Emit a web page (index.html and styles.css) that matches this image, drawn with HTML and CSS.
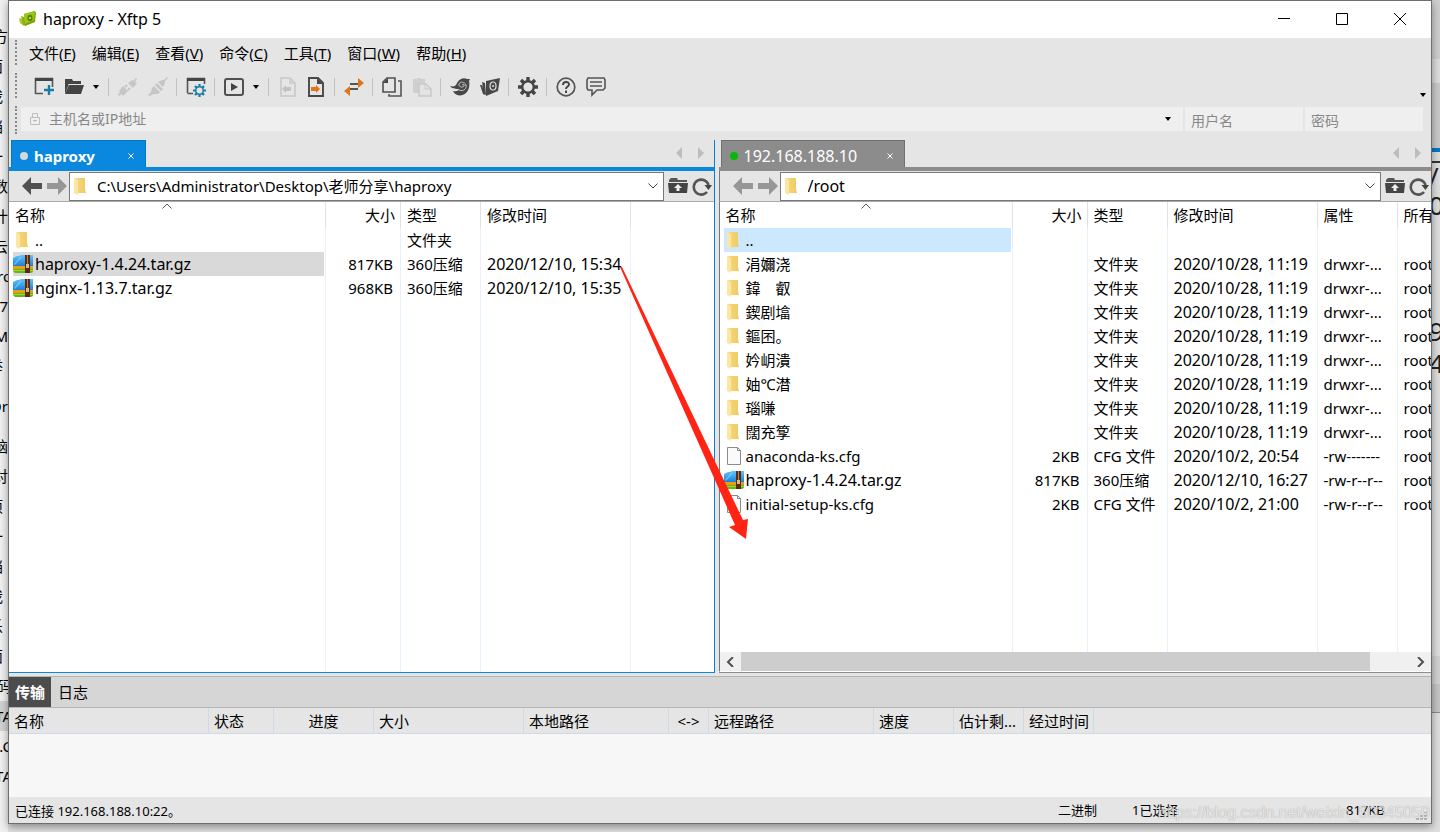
FILE: index.html
```html
<!DOCTYPE html>
<html lang="zh-CN">
<head>
<meta charset="utf-8">
<title>haproxy - Xftp 5</title>
<link rel="stylesheet" href="styles.css">
</head>
<body>
<svg class="defs" aria-hidden="true">
  <defs>
    <linearGradient id="foldGrad" x1="0" x2="1"><stop offset="0" stop-color="#f6d77c"/><stop offset="1" stop-color="#eecb62"/></linearGradient>
    <linearGradient id="skyGrad" x1="0" y1="0" x2="0" y2="1"><stop offset="0" stop-color="#62c4fa"/><stop offset="1" stop-color="#1b82d6"/></linearGradient>
  </defs>
  <symbol id="folder" viewBox="0 0 20 20"><path d="M4 2h10v11l1 4H7z" fill="url(#foldGrad)"/><path d="M3 2l4 2v15l-4-2z" fill="#fbe6a4"/></symbol>
  <symbol id="archive" viewBox="0 0 20 20"><path d="M0 4l4-2 2 0 2-1h12v11H0z" fill="url(#skyGrad)"/><path d="M1 10l6-7 2 0-7 8z" fill="#8ad8ff" opacity=".6"/><path d="M0 12h20v3H0z" fill="#f49a12"/><path d="M0 15h20v3l-2 1H2l-2-2z" fill="#63b71d"/><path d="M0 16h20v1H0z" fill="#9bdc2d"/><path d="M12 1h5v18h-5z" fill="#5b2c14"/><path d="M14 1h1v11h-1z" fill="#b88350"/><path d="M13 10h3v4h-3z" fill="#d9bb8b"/></symbol>
  <symbol id="file" viewBox="0 0 20 20"><path d="M3.500 1.500h10l3 3v14h-13z" fill="#fafafa" stroke="#8b8b8b"/><path d="M13.500 1.500v3h3" fill="none" stroke="#8b8b8b"/></symbol>
  <symbol id="back" viewBox="0 0 20 18"><path d="M0 9L9 0v6h11v6H9v6z" fill="currentColor"/></symbol>
  <symbol id="up" viewBox="0 0 20 18"><path d="M1 3l2-2h6l1 2h9v2H1z" fill="#555"/><path d="M0 6h20l-1 10H1z" fill="#444"/><path d="M10 7L6 11h2.500v3h3v-3H14z" fill="#eee"/></symbol>
  <symbol id="reload" viewBox="0 0 20 20"><path d="M15 16a7.500 7.500 0 1 1 1.500-7" fill="none" stroke="#555" stroke-width="2.600"/><path d="M12.500 9h7.500l-3.500 5z" fill="#444"/></symbol>
  <symbol id="chev" viewBox="0 0 10 6"><path d="M.5.5L5 5 9.500.5" fill="none" stroke="#444"/></symbol>
  <symbol id="down" viewBox="0 0 8 6"><path d="M1 1h6L4 5z" fill="#000"/></symbol>
  <symbol id="cross" viewBox="0 0 6 6"><path d="M.5.5l5 5M5.500.5l-5 5" fill="none" stroke="#fff"/></symbol>
  <symbol id="gear" viewBox="0 0 20 20"><path d="M10 0v4M10 16v4M0 10h4M16 10h4M3 3l3 3M14 14l3 3M17 3l-3 3M6 14l-3 3" stroke="currentColor" stroke-width="3.400"/><circle cx="10" cy="10" r="5.800" fill="none" stroke="currentColor" stroke-width="2.400"/></symbol>
</svg>

<div class="desktop">
  <div class="edge-left" aria-hidden="true">
    <span>方</span><span class="in">面</span><span class="in">我</span><span class="in">档</span><span class="in">一</span><span>数</span><span>计</span><span>云</span><span class="out">ro</span><span>07</span><span>M</span><span class="in">举</span><span class="gap">Or</span><span class="gap">脑</span><span>对</span><span class="in">项</span><span class="in">一</span><span class="in">档</span><span class="in">我</span><span class="in">乐</span><span class="in">面</span><span class="out">号码</span><span class="hit out">TA</span><span class="out">.C</span><span class="out">TA</span>
  </div>

  <main class="window">
    <header class="title">
      <svg class="logo" viewBox="0 0 18 18"><path d="M0 8l3 1 2 7-4-3z" fill="#a9c62c"/><path d="M2 6l3 1 2 9-3-1z" fill="#8fae16"/><path d="M5 4l11-3 1 2-1 9-10 4z" fill="#76a500"/><path d="M5 4l11-3-1 9-9 4z" fill="#9bc713"/><ellipse cx="11" cy="8" rx="2.600" ry="3.200" fill="#5b8500"/><circle cx="11" cy="8" r="1" fill="#d5ee79"/></svg>
      <h1>haproxy - Xftp 5</h1>
      <button class="wbtn" aria-label="最小化"><svg width="12" height="12" viewBox="0 0 12 12"><path d="M0 5.500h12" stroke="#000"/></svg></button>
      <button class="wbtn" aria-label="最大化"><svg width="12" height="12" viewBox="0 0 12 12"><path d="M.5.5h11v11H.5z" fill="none" stroke="#000"/></svg></button>
      <button class="wbtn" aria-label="关闭"><svg width="12" height="12" viewBox="0 0 12 12"><path d="M0 0l12 12M12 0L0 12" stroke="#000"/></svg></button>
    </header>

    <nav class="menu grip">
      <button>文件(<u>F</u>)</button><button>编辑(<u>E</u>)</button><button>查看(<u>V</u>)</button><button>命令(<u>C</u>)</button><button>工具(<u>T</u>)</button><button>窗口(<u>W</u>)</button><button>帮助(<u>H</u>)</button>
    </nav>

    <div class="tools grip">
      <button aria-label="新建"><svg viewBox="0 0 20 20"><path d="M1.500 17V1.500h17V10M1.500 16.500H9" fill="none" stroke="#555" stroke-width="1.600"/><path d="M1 1h18v3H1z" fill="#444"/><path d="M15 8v10M10 13h10" stroke="#1a7ca6" stroke-width="2.400"/></svg></button>
      <button aria-label="打开"><svg viewBox="0 0 20 20"><path d="M1 2h7l1 2h8v3H5L1 17z" fill="#444"/><path d="M5 8h15l-3 9H1z" fill="#444"/><path d="M4.500 7.500H18" stroke="#e5e5e5"/></svg></button>
      <button class="drop" aria-label="打开列表"><svg viewBox="0 0 8 6"><use href="#down"/></svg></button>
      <i class="sep"></i>
      <button aria-label="断开"><svg viewBox="0 0 20 20" fill="#c6c6c6"><path d="M1 14l4-5 5 5-5 5-1-2-3 2-1-1 2-3zM10 6l4-3 1 1 3-3 1 1-2 3 2 1-4 5z"/><path d="M7 10l2-2M10 13l2-2" stroke="#c6c6c6" stroke-width="2"/></svg></button>
      <button aria-label="连接"><svg viewBox="0 0 20 20" fill="#c6c6c6"><path d="M0 18l3-3 1-4 2-2 6 6-2 2-4 0-5 2zM7 8l2-2 6 6-2 2zM10 5l4-2 2 0 3-3 1 1-3 3 0 2-2 4z"/></svg></button>
      <i class="sep"></i>
      <button aria-label="属性"><svg viewBox="0 0 20 20"><path d="M1.500 16V1.500h17V7M1.500 16.500H7" fill="none" stroke="#555" stroke-width="1.600"/><path d="M1 1h18v3H1z" fill="#444"/><svg x="7" y="7" width="13" height="13" color="#1a7ca6"><use href="#gear"/></svg></svg></button>
      <i class="sep"></i>
      <button aria-label="运行"><svg viewBox="0 0 20 20"><rect x="1" y="2" width="18" height="16" rx="2" fill="none" stroke="#505050" stroke-width="2"/><path d="M7 6l7 4-7 4z" fill="#444"/></svg></button>
      <button class="drop" aria-label="运行列表"><svg viewBox="0 0 8 6"><use href="#down"/></svg></button>
      <i class="sep"></i>
      <button class="tight" aria-label="上一个"><svg viewBox="0 0 20 20"><path d="M3 1h9l5 5v13H3z" fill="none" stroke="#c8c8c8" stroke-width="1.600"/><path d="M11 1v6h6" fill="#d0d0d0"/><path d="M4 12l4-4v2h5v4H8v2z" fill="#c2c2c2"/></svg></button>
      <button aria-label="下一个"><svg viewBox="0 0 20 20"><path d="M3 1h9l5 5v13H3z" fill="none" stroke="#484848" stroke-width="1.900"/><path d="M11 1v6h6" fill="#484848"/><path d="M14 12l-4-4v2H5v4h5v2z" fill="#e0761a"/></svg></button>
      <i class="sep"></i>
      <button aria-label="同步"><svg viewBox="0 0 20 20"><path d="M6 7h9M5 12h9" stroke="#555" stroke-width="1.800"/><path d="M14 1l6 5-6 5zM6 9L0 14l6 5z" fill="#e0761a"/></svg></button>
      <i class="sep"></i>
      <button aria-label="复制"><svg viewBox="0 0 20 20"><path d="M5 1h8v14H1V5z" fill="none" stroke="#505050" stroke-width="1.600"/><path d="M1 6l5-5v5z" fill="#444"/><path d="M16 4h3v15H7v-2" fill="none" stroke="#555" stroke-width="1.600"/></svg></button>
      <button aria-label="粘贴"><svg viewBox="0 0 20 20"><path d="M1 2h4V1h4v1h4v5H8v9H1z" fill="#cfcfcf"/><path d="M7 7h7l5 5v7H7z" fill="#e3e3e3" stroke="#c9c9c9" stroke-width="1.500"/><path d="M13 7v5h6" fill="none" stroke="#c9c9c9"/></svg></button>
      <i class="sep"></i>
      <button aria-label="Xshell"><svg viewBox="0 0 20 20"><path d="M0 9c4 1 6 0 7-3C9 2 14 0 17 2l3 0-1 2c1 4 0 9-3 12-4 4-11 3-13-2 4 1 6-1 6-2-3 0-7 0-9-3z" fill="#474747"/><path d="M9 13c5 2 8-2 7-5s-6-4-7-1 4 4 5 2-1-2-2-1" fill="none" stroke="#c8c8c8" stroke-width="1"/></svg></button>
      <button aria-label="Xftp"><svg viewBox="0 0 20 20"><path d="M0 8l2 0 3 10-2-1zM2 5l3 1 1 12-2-1zM6 4l14-3-2 13-12 5z" fill="#474747"/><ellipse cx="13" cy="9" rx="3" ry="4" fill="none" stroke="#ddd" stroke-width="1.200"/><circle cx="13" cy="9" r="1" fill="#ddd"/></svg></button>
      <i class="sep"></i>
      <button aria-label="选项"><svg viewBox="0 0 20 20" color="#444"><use href="#gear"/></svg></button>
      <i class="sep"></i>
      <button aria-label="帮助"><svg viewBox="0 0 20 20"><circle cx="10" cy="10" r="8.800" fill="none" stroke="#555" stroke-width="1.700"/><path d="M7 8c0-4 6-4 6-.5 0 2-3 2-3 4.500M10 13.500V16" fill="none" stroke="#444" stroke-width="1.900"/></svg></button>
      <button aria-label="反馈"><svg viewBox="0 0 20 20"><path d="M1 3l1-2h16l1 2v8l-2 2h-6l-5 5v-5H2l-1-2z" fill="none" stroke="#555" stroke-width="1.600"/><path d="M4 5h12M4 9h12" stroke="#555" stroke-width="1.500"/></svg></button>
      <button class="drop more" aria-label="工具栏选项"><svg viewBox="0 0 8 6"><use href="#down"/></svg></button>
    </div>

    <form class="address grip">
      <label class="field host"><svg width="10" height="12" viewBox="0 0 10 12"><path d="M.5 4.500h9v7h-9zM2.500 4V.5h5V4M5 7v2M3 7.500h4" fill="none" stroke="#bcbcbc"/></svg><input aria-label="主机名或IP地址" placeholder="主机名或IP地址"><svg class="tiny" viewBox="0 0 8 6"><use href="#down"/></svg></label>
      <label class="field cred"><input aria-label="用户名" placeholder="用户名"></label>
      <label class="field cred"><input type="password" aria-label="密码" placeholder="密码"></label>
    </form>

    <div class="panes">
      <section class="pane local">
        <div class="tabs">
          <button class="tab"><i class="dot"></i><b>haproxy</b><svg width="6" height="6"><use href="#cross"/></svg></button>
          <span class="pager"><svg viewBox="0 0 28 12"><path d="M6 0v12L0 6zM22 0v12l6-6z" fill="#bdbdbd"/></svg></span>
        </div>
        <div class="path">
          <button class="nav dark" aria-label="后退"><svg viewBox="0 0 20 18"><use href="#back"/></svg></button>
          <button class="nav flip" aria-label="前进"><svg viewBox="0 0 20 18"><use href="#back"/></svg></button>
          <label class="combo"><svg width="20" height="20"><use href="#folder"/></svg><input aria-label="本地路径" value="C:\Users\Administrator\Desktop\老师分享\haproxy"><svg width="10" height="6"><use href="#chev"/></svg></label>
          <button class="act" aria-label="上级目录"><svg width="20" height="18"><use href="#up"/></svg></button>
          <button class="act" aria-label="刷新"><svg width="20" height="20"><use href="#reload"/></svg></button>
        </div>
        <div class="list">
          <table class="files">
            <colgroup><col class="c-name-l"><col class="c-size"><col class="c-type"><col class="c-date"><col></colgroup>
            <thead><tr><th>名称<svg class="sort" viewBox="0 0 10 6"><path d="M.5 5.500L5 1l4.500 4.500" fill="none" stroke="#555"/></svg></th><th class="num">大小</th><th>类型</th><th>修改时间</th><th></th></tr></thead>
            <tbody>
              <tr><td><span class="name"><svg><use href="#folder"/></svg>..</span></td><td></td><td>文件夹</td><td></td><td></td></tr>
              <tr><td><span class="name lat picked"><svg><use href="#archive"/></svg>haproxy-1.4.24.tar.gz</span></td><td class="num">817KB</td><td>360压缩</td><td class="lat">2020/12/10, 15:34</td><td></td></tr>
              <tr><td><span class="name lat"><svg><use href="#archive"/></svg>nginx-1.13.7.tar.gz</span></td><td class="num">968KB</td><td>360压缩</td><td class="lat">2020/12/10, 15:35</td><td></td></tr>
              <tr class="fill"><td></td><td></td><td></td><td></td><td></td></tr>
            </tbody>
          </table>
        </div>
      </section>

      <section class="pane remote">
        <div class="tabs">
          <button class="tab"><i class="dot"></i><span class="lat">192.168.188.10</span><svg width="6" height="6"><use href="#cross"/></svg></button>
          <span class="pager"><svg viewBox="0 0 28 12"><path d="M6 0v12L0 6zM22 0v12l6-6z" fill="#bdbdbd"/></svg></span>
        </div>
        <div class="path">
          <button class="nav" aria-label="后退"><svg viewBox="0 0 20 18"><use href="#back"/></svg></button>
          <button class="nav flip" aria-label="前进"><svg viewBox="0 0 20 18"><use href="#back"/></svg></button>
          <label class="combo lat"><svg width="20" height="20"><use href="#folder"/></svg><input aria-label="远程路径" value="/root"><svg width="10" height="6"><use href="#chev"/></svg></label>
          <button class="act" aria-label="上级目录"><svg width="20" height="18"><use href="#up"/></svg></button>
          <button class="act" aria-label="刷新"><svg width="20" height="20"><use href="#reload"/></svg></button>
        </div>
        <div class="list">
          <table class="files">
            <colgroup><col class="c-name-r"><col class="c-size"><col class="c-type"><col class="c-date"><col class="c-attr"><col></colgroup>
            <thead><tr><th>名称<svg class="sort" viewBox="0 0 10 6"><path d="M.5 5.500L5 1l4.500 4.500" fill="none" stroke="#555"/></svg></th><th class="num">大小</th><th>类型</th><th>修改时间</th><th>属性</th><th>所有者</th></tr></thead>
            <tbody>
              <tr><td><span class="name hover"><svg><use href="#folder"/></svg>..</span></td><td></td><td></td><td></td><td></td><td></td></tr>
              <tr><td><span class="name"><svg><use href="#folder"/></svg>涓嬭浇</span></td><td></td><td>文件夹</td><td class="lat">2020/10/28, 11:19</td><td>drwxr-...</td><td>root</td></tr>
              <tr><td><span class="name"><svg><use href="#folder"/></svg>鍏　叡</span></td><td></td><td>文件夹</td><td class="lat">2020/10/28, 11:19</td><td>drwxr-...</td><td>root</td></tr>
              <tr><td><span class="name"><svg><use href="#folder"/></svg>鍥剧墖</span></td><td></td><td>文件夹</td><td class="lat">2020/10/28, 11:19</td><td>drwxr-...</td><td>root</td></tr>
              <tr><td><span class="name"><svg><use href="#folder"/></svg>鏂囨。</span></td><td></td><td>文件夹</td><td class="lat">2020/10/28, 11:19</td><td>drwxr-...</td><td>root</td></tr>
              <tr><td><span class="name"><svg><use href="#folder"/></svg>妗岄潰</span></td><td></td><td>文件夹</td><td class="lat">2020/10/28, 11:19</td><td>drwxr-...</td><td>root</td></tr>
              <tr><td><span class="name"><svg><use href="#folder"/></svg>妯℃澘</span></td><td></td><td>文件夹</td><td class="lat">2020/10/28, 11:19</td><td>drwxr-...</td><td>root</td></tr>
              <tr><td><span class="name"><svg><use href="#folder"/></svg>瑙嗛</span></td><td></td><td>文件夹</td><td class="lat">2020/10/28, 11:19</td><td>drwxr-...</td><td>root</td></tr>
              <tr><td><span class="name"><svg><use href="#folder"/></svg>闊充箰</span></td><td></td><td>文件夹</td><td class="lat">2020/10/28, 11:19</td><td>drwxr-...</td><td>root</td></tr>
              <tr><td><span class="name"><svg><use href="#file"/></svg>anaconda-ks.cfg</span></td><td class="num">2KB</td><td>CFG 文件</td><td class="lat">2020/10/2, 20:54</td><td>-rw-------</td><td>root</td></tr>
              <tr><td><span class="name lat"><svg><use href="#archive"/></svg>haproxy-1.4.24.tar.gz</span></td><td class="num">817KB</td><td>360压缩</td><td class="lat">2020/12/10, 16:27</td><td>-rw-r--r--</td><td>root</td></tr>
              <tr><td><span class="name"><svg><use href="#file"/></svg>initial-setup-ks.cfg</span></td><td class="num">2KB</td><td>CFG 文件</td><td class="lat">2020/10/2, 21:00</td><td>-rw-r--r--</td><td>root</td></tr>
              <tr class="fill"><td></td><td></td><td></td><td></td><td></td><td></td></tr>
            </tbody>
          </table>
        </div>
        <div class="scroll"><button aria-label="向左"><svg viewBox="0 0 8 10"><path d="M7 0L2 5l5 5" fill="none" stroke="#505050" stroke-width="2"/></svg></button><span class="track"><i class="thumb"></i></span><button aria-label="向右"><svg viewBox="0 0 8 10"><path d="M1 0l5 5-5 5" fill="none" stroke="#505050" stroke-width="2"/></svg></button></div>
      </section>
    </div>

    <section class="transfer">
      <div class="ttabs"><button class="on">传输</button><button>日志</button></div>
      <table class="queue">
        <colgroup><col class="q200"><col class="q65"><col class="q100"><col class="q150"><col class="q145"><col class="q40"><col class="q165"><col class="q80"><col class="q70"><col class="q70"><col></colgroup>
        <thead><tr><th>名称</th><th>状态</th><th class="mid">进度</th><th>大小</th><th>本地路径</th><th class="mid">&lt;-&gt;</th><th>远程路径</th><th>速度</th><th>估计剩...</th><th>经过时间</th><th></th></tr></thead>
      </table>
    </section>

    <footer class="status">
      <span class="conn">已连接 192.168.188.10:22。</span><span class="mode">二进制</span><span class="sel">1已选择</span><span class="bytes">817KB</span>
      <svg class="corner" viewBox="0 0 12 9"><path d="M8 0h3v2H8zM4 3h3v2H4zM8 3h3v2H8zM0 6h3v2H0zM4 6h3v2H4zM8 6h3v2H8z" fill="#b5b5b5"/></svg>
      <span class="mark">https://blog.csdn.net/weixin_50345059</span>
    </footer>

    <svg class="pointer" viewBox="0 0 128 274" aria-hidden="true"><path d="M0 0l2 0 121 253 5-1-2 20-17-12 6-2z" fill="#ff2414"/></svg>
  </main>

  <div class="edge-right" aria-hidden="true">
    <i class="r1"></i><i class="r2"></i><i class="r3"></i><i class="r4"></i>
    <div class="term"><span>/</span><span>0</span><span class="skip">9</span><span>4</span></div>
    <i class="r5"></i><i class="r6"></i>
  </div>
</div>
</body>
</html>
```

FILE: styles.css
```css
* { box-sizing: border-box; }
body { margin: 0; background: #e2e2e2; font: 15px/20px "Noto Sans", "Noto Sans CJK SC", sans-serif; color: #000; overflow: hidden; }
button, input { font: inherit; color: inherit; border: 0; background: none; padding: 0; margin: 0; outline: 0; }
button { display: flex; align-items: center; justify-content: center; flex: none; }
svg { display: block; flex: none; }
.defs { position: absolute; width: 0; height: 0; }
.desktop { display: flex; height: 100vh; }
.lat { font-size: 16px; }

/* Slices of the windows behind */
.edge-left { width: 8px; flex: none; background: #f0f0f0; display: flex; flex-direction: column; padding-top: 21px; overflow: hidden; }
.edge-left span { height: 30px; line-height: 30px; display: flex; justify-content: flex-end; flex: none; white-space: nowrap; font-size: 15px; }
.edge-left .in { padding-right: 5px; }
.edge-left .out { margin-right: -4px; }
.edge-left .gap { margin-top: 10px; }
.edge-left .hit { background: #d2d2d2; }
.edge-right { width: 8px; flex: none; display: flex; flex-direction: column; background: #dedede; overflow: hidden; }
.edge-right i { flex: none; }
.r1 { height: 59px; background: #cecece; }
.r2 { height: 24px; background: #dcdcdc; }
.r3 { height: 65px; background: #c9c9c9; }
.r4 { height: 15px; background: #dcdcdc; border-top: 4px solid #0078c8; border-bottom: 2px solid #333; }
.term { height: 493px; background: #dedede; font: 26px/32px "Noto Sans", sans-serif; color: #222; }
.term span { display: block; margin-left: -3px; }
.term span:first-child { line-height: 26px; }
.term .skip { margin-top: 94px; }
.r5 { height: 28px; background: #d2d2d2; }
.r6 { height: 29px; background: #c4c4c4; border-bottom: 1px solid #888; }

.window { position: relative; flex: 1; min-width: 0; margin-bottom: 8px; border: 1px solid #6e6e6e; background: #e5e5e5; display: flex; flex-direction: column; box-shadow: 0 3px 8px rgba(0,0,0,.4); }
.title { display: flex; align-items: center; height: 37px; flex: none; background: #fff; padding: 0 2px 2px 10px; }
.title h1 { flex: 1; margin: 0 0 0 6px; font-size: 16px; font-weight: 400; }
.logo { width: 18px; height: 18px; }
.wbtn { width: 58px; height: 35px; }

.grip { position: relative; padding-left: 19px; flex: none; }
.grip::before { content: ""; position: absolute; left: 6px; top: 2px; bottom: 6px; border-left: 2px dotted #888; }
.menu { display: flex; align-items: center; gap: 16px; height: 33px; padding: 0 0 4px 20px; }
.tools { display: flex; align-items: center; height: 33px; padding: 0 0 2px 25px; }
.tools button { margin-right: 10px; }
.tools svg { width: 20px; height: 20px; }
.tools svg svg { width: 13px; height: 13px; }
.tools .tight { margin-right: 8px; }
.tools button:has(+ .sep) { margin-right: 8px; }
.tools .drop { margin-left: -2px; }
.tools .drop svg { width: 8px; height: 6px; }
.tools .more { margin: 16px 4px 0 auto; }
.sep { flex: none; width: 1px; height: 18px; margin-right: 9px; background: #c2c2c2; }
.address { display: flex; gap: 2px; height: 36px; padding: 3px 8px 9px 12px; }
.field { display: flex; align-items: center; background: #efefef; padding: 0 6px; }
.field input { flex: 1; min-width: 0; width: 0; font-size: 14px; }
.field input::placeholder { color: #888; opacity: 1; }
.host { flex: 1; padding-left: 9px; gap: 9px; }
.tiny { width: 8px; height: 6px; margin-right: 5px; }
.cred { width: 118px; flex: none; padding-top: 4px; }

.panes { display: flex; flex: 1; min-height: 0; gap: 4px; }
.pane { display: flex; flex-direction: column; min-width: 0; --accent: #0a88e0; }
.local { flex: 705 1 0; border-right: 1px solid #0a7fd2; border-bottom: 1px solid #0a88e0; }
.remote { flex: 713 1 0; border-bottom: 1px solid #8c8c8c; --accent: #8c8c8c; }
.tabs { display: flex; align-items: stretch; height: 31px; flex: none; padding-left: 2px; border-bottom: 4px solid var(--accent); }
.tab { position: relative; background: var(--accent); color: #fff; padding: 3px 11px 0 8px; border: 1px solid #0078c8; border-bottom: 0; }
.local .tab { width: 135px; }
.remote .tab { width: 184px; border-color: #707070; }
.tab b, .tab span { flex: 1; text-align: left; margin-left: 6px; }
.dot { width: 8px; height: 8px; border-radius: 50%; background: #d8d8d8; }
.remote .dot { background: #08b808; }
.pager { margin-left: auto; padding: 7px 10px 0 0; }
.pager svg { width: 28px; height: 12px; }
.path { display: flex; align-items: center; height: 31px; flex: none; padding-left: 13px; border-bottom: 1px solid #aaa; }
.remote .path, .remote .list, .remote .scroll { border-left: 1px solid #777; }
.nav { color: #969696; margin-right: 5px; }
.nav svg { width: 20px; height: 18px; }
.nav.dark { color: #505050; }
.flip { transform: scaleX(-1); margin-right: 2px; }
.combo { display: flex; align-items: center; flex: 1; min-width: 0; height: 29px; border: 1px solid #777; background: #fff; padding: 0 5px 0 1px; }
.combo input { flex: 1; min-width: 0; margin-left: 6px; }
.act { width: 20px; margin-left: 4px; }
.act:last-child { margin-right: 2px; }
.list { flex: 1; min-height: 0; overflow: hidden; background: #fff; }

table { border-collapse: separate; border-spacing: 0; table-layout: fixed; width: 100%; }
th { font-weight: 400; text-align: left; }
.files { height: 100%; }
.files th, .files td { height: 24px; padding: 0 0 0 6px; border-right: 1px solid #e6f1fb; white-space: nowrap; overflow: hidden; }
.files th:last-child, .files td:last-child { border-right: 0; }
.files th { position: relative; height: 26px; border-color: #e2e2e2; }
.files .num { text-align: right; padding-right: 7px; }
.files th.num { padding-right: 5px; }
.files td:first-child { padding: 0 1px 0 4px; }
.files .fill td { height: auto; }
.name { display: flex; align-items: center; gap: 2px; height: 24px; }
.name svg { width: 20px; height: 20px; }
.picked { background: #d9d9d9; }
.hover { background: #cce8ff; }
.sort { position: absolute; top: 1px; left: 50%; width: 10px; height: 6px; margin-left: -5px; }
.c-name-l { width: 317px; }
.c-name-r { width: 293px; }
.c-size { width: 75px; }
.c-type, .c-attr { width: 80px; }
.c-date { width: 150px; }

.scroll { display: flex; height: 20px; flex: none; background: #f0f0f0; border-bottom: 1px solid #fff; }
.scroll button { width: 21px; }
.scroll svg { width: 8px; height: 10px; }
.track { flex: 1; display: flex; }
.thumb { width: 94%; background: #cdcdcd; }

.transfer { flex: none; height: 121px; margin-top: 3px; background: #f7f7f7; border-top: 1px solid #b4b4b4; }
.ttabs { display: flex; height: 31px; background: #d6d6d6; border-bottom: 1px solid #b4b4b4; }
.ttabs button { padding: 0 7px 1px; }
.ttabs .on { padding: 0 6px 1px; background: #4c4c4c; color: #fff; font-weight: 700; }
.queue th { height: 26px; padding: 0 0 0 5px; background: #e5e5e5; border-right: 1px solid #d0dae6; border-bottom: 1px solid #d0dae6; white-space: nowrap; overflow: hidden; }
.queue th:last-child { border-right: 0; }
.queue .mid { padding: 0; text-align: center; }
.q200 { width: 200px; } .q65 { width: 65px; } .q100 { width: 100px; } .q150 { width: 150px; } .q145 { width: 145px; }
.q40 { width: 40px; } .q165 { width: 165px; } .q80 { width: 80px; } .q70 { width: 70px; }

.status { position: relative; flex: none; display: flex; align-items: center; height: 26px; padding-left: 6px; font-size: 13px; }
.conn { flex: 1; padding-top: 2px; }
.mode { width: 74px; }
.sel { width: 214px; }
.bytes { width: 85px; }
.corner { position: absolute; right: 3px; bottom: 2px; width: 12px; height: 9px; }
.mark { position: absolute; right: 1px; bottom: 0; font: 16px/20px "Liberation Sans", sans-serif; color: rgba(255,255,255,.75); text-shadow: 0 0 1px rgba(0,0,0,.4); }
.pointer { position: absolute; left: 611px; top: 266px; width: 128px; height: 274px; overflow: visible; }
```
